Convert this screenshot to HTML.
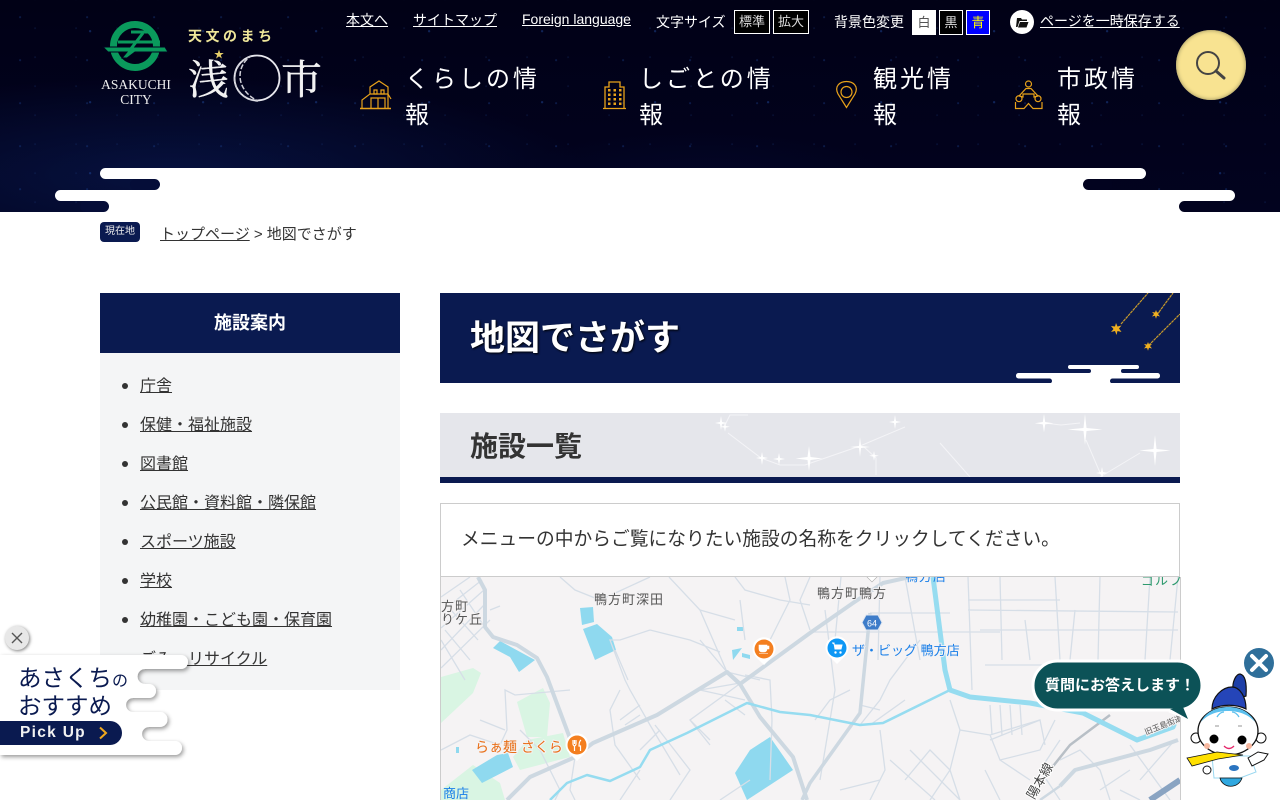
<!DOCTYPE html>
<html lang="ja">
<head>
<meta charset="utf-8">
<title>地図でさがす</title>
<style>
html,body{margin:0;padding:0;background:#fff}
body{width:1280px;height:800px;overflow:hidden;position:relative;font-family:"Liberation Sans","Noto Sans CJK JP",sans-serif;color:#333;font-size:16px}
a{color:inherit}
.a{position:absolute;white-space:nowrap}
#hd{position:absolute;left:0;top:0;width:1280px;height:212px;overflow:hidden;
background:
radial-gradient(circle at 30% 40%,rgba(30,70,150,.35) 0 .8px,transparent 1.3px) 0 0/67px 43px,
radial-gradient(circle at 70% 20%,rgba(30,70,150,.5) 0 .9px,transparent 1.4px) 11px 17px/113px 71px,
radial-gradient(circle at 10% 80%,rgba(25,55,120,.25) 0 .7px,transparent 1.2px) 31px 5px/41px 29px,
radial-gradient(ellipse 420px 100px at 170px 175px,rgba(10,30,90,.55),transparent),
radial-gradient(ellipse 200px 60px at 700px 190px,rgba(6,14,60,.4),transparent),
linear-gradient(180deg,#010116 0,#010118 40px,#02031f 212px)}
.tl{font-size:14px;color:#fff;text-decoration:underline;line-height:20px}
.lb{font-size:14px;color:#fff;line-height:20px}
.bt{position:absolute;top:10px;height:22px;border:1px solid #fff;font-size:13px;line-height:22px;text-align:center;color:#ddd;background:#000}
.nav{position:absolute;top:62px;font-size:24px;line-height:36px;letter-spacing:3px;color:#fff;white-space:nowrap}
#side{position:absolute;left:100px;top:293px;width:300px;height:397px;background:#f4f5f6}
#side h2{margin:0;height:60px;background:#0a1a50;color:#fff;font-size:18px;font-weight:bold;line-height:61px;text-align:center}
#side ul{margin:0;padding:13px 0 0 40px}
#side li{height:39px;line-height:39px;font-size:16px}
#side li::marker{font-size:20px}
#h1{position:absolute;left:440px;top:293px;width:740px;height:90px;background:#0a1a50;overflow:hidden}
#h1 div{position:absolute;left:30px;top:24px;font-size:35px;line-height:44px;font-weight:bold;color:#fff;text-shadow:1px 1px 2px #000;white-space:nowrap}
#h2{position:absolute;left:440px;top:413px;width:740px;height:64px;background:#e5e6eb;border-bottom:6px solid #0a1a50;overflow:hidden}
#h2 div{position:absolute;left:30px;top:16px;font-size:28px;line-height:36px;font-weight:bold;color:#333;white-space:nowrap}
#box{position:absolute;left:440px;top:503px;width:738px;height:72px;border:1px solid #ccc;background:#fff}
#box div{position:absolute;left:20px;top:21px;font-size:18.750px;line-height:28px;white-space:nowrap}
#map{position:absolute;left:440px;top:577px;width:739px;height:223px;border-left:1px solid #ccc;border-right:1px solid #ccc;overflow:hidden;background:#f5f3f4}
#map text{font-family:"Liberation Sans","Noto Sans CJK JP",sans-serif}
</style>
</head>
<body>

<div id="hd">
  <svg class="a" style="left:0;top:0" width="1280" height="212" viewBox="0 0 1280 212">
    <rect x="100" y="168" width="1046" height="11" rx="5.500" fill="#fff"/>
    <rect x="150" y="176" width="943" height="18" fill="#fff"/>
    <rect x="55" y="190" width="1180" height="11" rx="5.500" fill="#fff"/>
    <rect x="99" y="198" width="1090" height="14" fill="#fff"/>
    <rect x="130" y="179" width="30" height="11" rx="5.500" fill="#050d38"/>
    <rect x="1083" y="179" width="30" height="11" rx="5.500" fill="#02031f"/>
    <rect x="80" y="201" width="29" height="11" rx="5.500" fill="#050d38"/>
    <rect x="1179" y="201" width="30" height="11" rx="5.500" fill="#02031f"/>
    <!-- logo -->
    <circle cx="135" cy="46" r="21.500" fill="none" stroke="#0a9a5c" stroke-width="7"/>
    <path d="M103 47H165L168 52H135L127 58H122L127 52H108Z" fill="#0a9a5c" stroke="#030320" stroke-width="1"/>
    <path d="M118 42H160M131 32H152M143 33L130 50" fill="none" stroke="#0a9a5c" stroke-width="3"/>
    <circle cx="257" cy="78" r="22.500" fill="none" stroke="#e8e8ee" stroke-width="1.800"/>
    <path d="M251 56C236 62 230 78 238 90C241 96 250 101 258 101C247 96 240 86 240 76C240 67 245 60 251 56Z" fill="none" stroke="#d0d0d8" stroke-width="1.500" stroke-dasharray="5 2"/>
    <!-- house -->
    <g fill="none" stroke="#e8a21a" stroke-width="1.200">
      <path d="M360 108.500H391" stroke-width="1.600"/>
      <path d="M362 108V100L370 94V87L379 81L388 87V94L391 99M370 94H388V108M371 108V98H385V108M378 98V108"/>
      <path d="M374 90h3v4h-3zM381 90h3v4h-3z"/>
    </g>
    <!-- building -->
    <g fill="none" stroke="#e8a21a" stroke-width="1.300">
      <path d="M603 108.500H626"/>
      <path d="M605 108V87H609V82H620V87H624V108"/>
    </g>
    <g fill="#e8a21a">
      <rect x="608" y="89" width="2.500" height="2.500"/><rect x="613.500" y="89" width="2.500" height="2.500"/><rect x="619" y="89" width="2.500" height="2.500"/>
      <rect x="608" y="93.500" width="2.500" height="2.500"/><rect x="613.500" y="93.500" width="2.500" height="2.500"/><rect x="619" y="93.500" width="2.500" height="2.500"/>
      <rect x="608" y="98" width="2.500" height="2.500"/><rect x="613.500" y="98" width="2.500" height="2.500"/><rect x="619" y="98" width="2.500" height="2.500"/>
      <rect x="608" y="102.500" width="2.500" height="2.500"/><rect x="613.500" y="102.500" width="2.500" height="2.500"/><rect x="619" y="102.500" width="2.500" height="2.500"/>
    </g>
    <!-- pin -->
    <g fill="none" stroke="#e8a21a" stroke-width="1.200">
      <path d="M846.500 107.500L838 94C834 86 840 81.500 846.500 81.500S859 86 855 94Z"/>
      <circle cx="846.500" cy="92" r="5.500"/>
    </g>
    <!-- people -->
    <g fill="none" stroke="#e8a21a" stroke-width="1.200">
      <circle cx="1028.500" cy="84" r="3"/>
      <path d="M1019 96L1026 88.500H1031L1038 96L1034 97V94H1023V97Z"/>
      <circle cx="1019" cy="98.700" r="3"/><circle cx="1038" cy="98.700" r="3"/>
      <path d="M1015.500 102V108.500H1024L1028.500 103.500L1033 108.500H1042V102"/>
    </g>
    <!-- folder -->
    <circle cx="1022" cy="22" r="12" fill="#fff"/>
    <path d="M1017 18h4l1 1.500h5v1.500h-7.500l-2 6h-1.500zM1020 22h8.500l-2 5.500h-8.500z" fill="#111"/>
  </svg>
  <div class="a" style="left:96px;top:77px;width:80px;text-align:center;font-family:'Liberation Serif',serif;font-size:13.500px;line-height:15px;color:#eee">ASAKUCHI<br>CITY</div>
  <div class="a" style="left:188px;top:26px;font-size:14px;line-height:20px;font-weight:bold;letter-spacing:3.500px;color:#efe79a">天文のまち</div>
  <div class="a" style="left:188px;top:49px;font-family:'Noto Serif CJK SC',serif;font-size:41px;line-height:56px;color:#f2f2f2;-webkit-text-stroke:.4px #f2f2f2">浅</div>
  <div class="a" style="left:281px;top:49px;font-family:'Noto Serif CJK SC',serif;font-size:41px;line-height:56px;color:#f2f2f2;-webkit-text-stroke:.4px #f2f2f2">市</div>
  <div class="a" style="left:214px;top:50px;font-size:10px;line-height:12px;color:#e6cf6a">★</div>

  <div class="a tl" style="left:346px;top:10px">本文へ</div>
  <div class="a tl" style="left:413px;top:10px">サイトマップ</div>
  <div class="a tl" style="left:522px;top:9px">Foreign language</div>
  <div class="a lb" style="left:656px;top:12px">文字サイズ</div>
  <div class="bt" style="left:734px;width:34px">標準</div>
  <div class="bt" style="left:773px;width:34px">拡大</div>
  <div class="a lb" style="left:834px;top:12px">背景色変更</div>
  <div class="bt" style="left:912px;width:24px;height:25px;line-height:25px;border:0;background:#fff;color:#555">白</div>
  <div class="bt" style="left:939px;width:22px;height:23px;line-height:23px;background:#000;color:#ddd">黒</div>
  <div class="bt" style="left:966px;width:22px;height:23px;line-height:23px;background:#00f;color:#ff0">青</div>
  <div class="a tl" style="left:1040px;top:11px">ページを一時保存する</div>

  <div class="nav" style="left:405px">くらしの情<br>報</div>
  <div class="nav" style="left:639px">しごとの情<br>報</div>
  <div class="nav" style="left:873px">観光情<br>報</div>
  <div class="nav" style="left:1057px">市政情<br>報</div>
</div>

<div class="a" style="left:1176px;top:30px;width:70px;height:70px;border-radius:50%;background:#f8e391;box-shadow:inset 0 0 4px #8d8558"></div>
<svg class="a" style="left:1176px;top:30px" width="70" height="70" viewBox="0 0 70 70">
  <circle cx="32" cy="33" r="11" fill="none" stroke="#444" stroke-width="2"/>
  <path d="M40 41L48 48" stroke="#444" stroke-width="3" stroke-linecap="round"/>
</svg>

<div class="a" style="left:100px;top:222px;width:40px;height:20px;border-radius:4px;background:#0a1a50;color:#eee;font-size:10px;line-height:20px;text-align:center">現在地</div>
<div class="a" style="left:160px;top:224px;font-size:15px;line-height:22px;color:#333"><a href="#">トップページ</a> &gt; 地図でさがす</div>

<div id="side">
  <h2>施設案内</h2>
  <ul>
    <li><a href="#">庁舎</a></li>
    <li><a href="#">保健・福祉施設</a></li>
    <li><a href="#">図書館</a></li>
    <li><a href="#">公民館・資料館・隣保館</a></li>
    <li><a href="#">スポーツ施設</a></li>
    <li><a href="#">学校</a></li>
    <li><a href="#">幼稚園・こども園・保育園</a></li>
    <li><a href="#">ごみ・リサイクル</a></li>
  </ul>
</div>

<div id="h1">
  <div>地図でさがす</div>
  <svg class="a" style="left:0;top:0" width="740" height="90" viewBox="0 0 740 90">
    <path d="M681 31L708 0M719 19L733 0M706 55L740 21" stroke="#c79a2b" stroke-width="1.200" fill="none" stroke-dasharray="3 .6"/>
    <path d="M676 30l1.500 3.500 4-1-2.500 3 2.500 3.500-4-1-1 4-1.500-4-4 1 2.500-3-2.500-3 4 .5z" fill="#f0b020"/>
    <path d="M716 17l1 2.500 3-.5-2 2 2 2.500-3-.8-1 3-1-3-3 .8 2-2.500-2-2 3 .5z" fill="#f0b020"/>
    <path d="M708 49l1 2.500 3-.5-2 2 2 2.500-3-.8-1 3-1-3-3 .8 2-2.500-2-2 3 .5z" fill="#f0b020"/>
    <rect x="628" y="72" width="71" height="4" rx="2" fill="#fff"/>
    <rect x="576" y="80" width="144" height="5.500" rx="2.500" fill="#fff"/>
    <rect x="645" y="74" width="42" height="8" fill="#fff"/>
    <rect x="605" y="83" width="72" height="7" fill="#fff"/>
    <rect x="590" y="85.500" width="22" height="5" rx="2.500" fill="#0a1a50"/>
    <rect x="670" y="85.500" width="60" height="5" rx="2.500" fill="#0a1a50"/>
    <rect x="635" y="76" width="16" height="4" rx="2" fill="#0a1a50"/>
    <rect x="681" y="76" width="16" height="4" rx="2" fill="#0a1a50"/>
  </svg>
</div>

<div id="h2">
  <div>施設一覧</div>
  <svg class="a" style="left:0;top:0" width="740" height="64" viewBox="0 0 740 64">
    <g stroke="#f4f4f7" stroke-width="1" fill="none">
      <path d="M285 12L290 2H308M288 20L321 45 L340 52H365L420 33L465 14M424 34L436 45V62M604 10L621 12L640 10M700 40L660 64M646 27L661 62M500 30L530 64"/>
    </g>
    <g fill="#fff">
      <path d="M280 0l1 6 5 1-5 1-1 6-1-6-5-1 5-1z" transform="translate(1 3)"/>
      <path d="M285 9l.8 4 4 .8-4 .8-.8 4-.8-4-4-.8 4-.8z"/>
      <path d="M322 39l1 5 5 1-5 1-1 6-1-6-5-1 5-1z"/>
      <path d="M339 40l1 5 5 1-5 1-1 5-1-5-5-1 5-1z"/>
      <path d="M369 33l1.500 11 12 1.500-12 1.500-1.500 11-1.500-11-12-1.500 12-1.500z"/>
      <path d="M420 24l1 9 9 1-9 1-1 9-1-9-9-1 9-1z"/>
      <path d="M455 2l1 6 5 1-5 1-1 6-1-6-5-1 5-1z"/>
      <path d="M434 38l.8 4 4 .8-4 .8-.8 4-.8-4-4-.8 4-.8z"/>
      <path d="M604 1l1.200 8 8 1.200-8 1.200-1.200 8-1.200-8-8-1.200 8-1.200z"/>
      <path d="M645 1l1.500 14 16 1.500-16 1.500-1.500 14-1.500-14-16-1.500 16-1.500z"/>
      <path d="M715 22l1.500 14 14 1.500-14 1.500-1.500 14-1.500-14-14-1.500 14-1.500z"/>
      <path d="M662 54l1 5 5 1-5 1-1 5-1-5-5-1 5-1z"/>
    </g>
  </svg>
</div>

<div id="box"><div>メニューの中からご覧になりたい施設の名称をクリックしてください。</div></div>

<div id="map">
<svg width="739" height="223" viewBox="441 577 739 223" style="display:block">
  <!-- greens -->
  <g fill="#d9f5e3">
    <path d="M441 677L473 668L481 673L473 693L441 723Z"/>
    <path d="M517 702L543 688L550 703L547 737L527 737Z"/>
    <path d="M513 757L527 740L563 733L570 757L520 770Z"/>
    <path d="M441 790L473 765L500 783L505 800H441Z"/>
  </g>
  <!-- ponds -->
  <g fill="#8fd9ef">
    <path d="M580 608L593 607L594 622L582 625Z"/>
    <path d="M583 629L597 624L612 637L616 650L595 660Z"/>
    <path d="M493 648L500 641L535 660L519 672L510 657Z"/>
    <path d="M472 770L497 755L508 753L513 767L482 783Z"/>
    <path d="M735 773L750 750L770 737L793 770L747 800Z"/>
    <path d="M737 627h6v4h-6zM732 650L742 648L733 660ZM742 653L750 655V659L742 657Z"/>
    <path d="M456 747h3v6h-3z"/>
  </g>
  <!-- minor roads -->
  <g fill="none" stroke="#d6dee7" stroke-width="1.300">
    <path d="M441 597L470 577M441 612L482 580M441 628L484 590M441 650L484 605M441 668L490 620M451 610L478 640M445 630L470 660M460 590L490 635M490 610L500 606M441 640L465 680"/>
    <path d="M560 577L575 590L600 600L650 577M650 630L690 640L720 652M650 630L620 640L610 640L625 680L630 690L650 725L680 775M615 650L628 680M620 690L610 710L615 745L640 780M640 705L620 720M625 725L640 715M655 725L690 770L670 800"/>
    <path d="M570 690L515 695L505 690L507 730L500 745L470 735L441 750M505 730L480 720M520 730L540 750L560 790L555 800M575 757L570 790L575 800"/>
    <path d="M669 577L700 610L727 672M700 610L735 620M735 577L745 590L780 600L810 605M740 600L745 640M785 577L790 600L775 630L770 640L772 650M810 577L800 600L810 630M745 680L690 720L710 740M700 690L745 700M740 683L700 690M690 720L710 745M725 700L745 715M745 675L770 680L772 720L770 780"/>
    <path d="M760 680L727 672L700 640M660 730L640 750M640 770L620 800M750 780L720 800"/>
    <path d="M810 632H1000M825 610L835 690L820 780M841 577L835 640M880 577L878 660M920 640L890 680L880 700L860 725M905 577L920 660M870 613H950M905 700L870 725"/>
    <path d="M968 577L972 690M1000 577L1002 660M1055 577L1060 660M1100 577L1098 660M1150 577L1145 660M1178 577L1170 660M968 610L1178 612M968 600H1060M980 630H1178M985 665H1060M1025 620L1030 660M1075 610L1070 660"/>
    <path d="M950 700L960 730L990 735L1040 720L1045 745M990 705L992 735M1000 705L1002 735M1010 705L1012 735M1020 705L1022 735"/>
    <path d="M990 740L1040 720M990 735L1000 760L1040 750L1055 720M1000 760L1030 780M1060 740L1040 770L1060 800M960 730L950 770L930 800M905 780L930 750L950 770L960 800M890 760L935 800M910 750L960 800M985 770L1000 800"/>
    <path d="M1060 760L1080 750L1100 770L1110 800M1130 745L1170 800M1130 770L1100 790M1120 790L1140 800M1175 740L1140 780"/>
    <path d="M850 690L830 700L815 720M860 705L880 710M880 730L885 770L870 800M840 790L880 780M1060 680L1090 700M1150 690L1178 700"/>
  </g>
  <!-- major roads -->
  <g fill="none" stroke="#cdd8e1" stroke-linejoin="round">
    <path stroke-width="4" d="M478 577L485 590L485 627L493 637L517 645L537 658L547 677L568 733L577 757"/>
    <path stroke-width="4" d="M507 800L530 777L573 758L593 743L657 715L727 672L740 684L810 633L853 603L883 583L910 577"/>
    <path stroke-width="4" d="M727 672L740 684L760 717L793 757L807 800"/>
    <path stroke-width="3.500" d="M870 613L860 713L810 783L802 800"/>
    <path stroke-width="4" d="M1060 786L1075 770L1150 750L1178 740"/>
    <path stroke-width="2.500" d="M1060 786L1040 800"/>
    <path stroke-width="2.500" d="M1050 770L1070 745L1110 715" stroke="#b8bfc6"/>
  </g>
  <!-- rivers -->
  <g fill="none" stroke="#96dcf0" stroke-linejoin="round">
    <path stroke-width="2.500" d="M550 800L567 783L587 775L610 781L640 767L650 750L687 733L747 703L780 712L810 715L860 725L883 723L950 690"/>
    <path stroke-width="5" d="M933 577L945 670L950 690L970 697L1030 703L1083 713L1137 740L1173 727L1178 715"/>
  </g>
  <path d="M1150 800L1180 780" stroke="#8aa4c2" stroke-width="6" fill="none"/>
  <!-- shield 64 -->
  <path d="M862 622.500L866 615H878L882 622.500L878 630H866Z" fill="#3d7cc9" stroke="#dfe6f0"/>
  <text x="872" y="626.500" font-size="9" fill="#fff" text-anchor="middle">64</text>
  <!-- labels -->
  <g font-size="13" fill="#555" style="paint-order:stroke" stroke="#f5f3f4" stroke-width="2">
    <text x="594" y="604" letter-spacing="1">鴨方町深田</text>
    <text x="817" y="598" letter-spacing="1">鴨方町鴨方</text>
    <text x="441" y="611" letter-spacing="1">方町</text>
    <text x="441" y="624" letter-spacing="1">りケ丘</text>
  </g>
  <text x="852" y="655" font-size="13" fill="#1a7fe8" stroke="#f5f3f4" stroke-width="2" style="paint-order:stroke">ザ・ビッグ 鴨方店</text>
  <text x="475" y="752" font-size="14" fill="#e8701a" stroke="#f5f3f4" stroke-width="2" style="paint-order:stroke">らぁ麺 さくら</text>
  <text x="443" y="798" font-size="13" fill="#1a7fe8">商店</text>
  <text x="1141" y="585" font-size="13" fill="#2e9a6e" letter-spacing="1">ゴルフ</text>
  <text x="905" y="581" font-size="13" fill="#1a7fe8" letter-spacing="1">鴨方店</text>
  <text transform="translate(1146 735) rotate(-22)" font-size="8" fill="#555" stroke="#f5f3f4" stroke-width="2" style="paint-order:stroke">旧玉島街道</text>
  <text transform="translate(1034 800) rotate(-60)" font-size="13" fill="#444" stroke="#fff" stroke-width="2" style="paint-order:stroke">陽本線</text>
  <!-- pins -->
  <path d="M866 572h12v4l-6 6-6-6z" fill="#fff" stroke="#aaa" stroke-width=".6"/>
  <g>
    <path d="M764 665L756 657A11.500 11.500 0 1 1 772 657Z" fill="#fff"/>
    <circle cx="764" cy="649" r="9.500" fill="#f47f20"/>
    <path d="M759 645h8v4a3 3 0 0 1-3 3h-2a3 3 0 0 1-3-3zM767 646h2v3h-2zM759 653.500h9" fill="#fff" stroke="#fff" stroke-width=".6"/>
  </g>
  <g>
    <path d="M577 761L569 753A11.500 11.500 0 1 1 585 753Z" fill="#fff"/>
    <circle cx="577" cy="745" r="9.500" fill="#f47f20"/>
    <path d="M573 740v4c0 1 1 2 1.500 2v5M576 740v4c0 1-1 2-1.500 2M574.500 740v4M581 740c-1.500 1-2 3-2 6h1.500v5" fill="none" stroke="#fff" stroke-width="1.200"/>
  </g>
  <g>
    <path d="M837 664L829 656A11.500 11.500 0 1 1 845 656Z" fill="#fff"/>
    <circle cx="837" cy="648" r="9.500" fill="#0d97f5"/>
    <path d="M832 643h2l1 6h6l1-4h-7.500" fill="#fff" stroke="#fff" stroke-width="1"/>
    <circle cx="835.500" cy="652.500" r="1.200" fill="#fff"/><circle cx="840.500" cy="652.500" r="1.200" fill="#fff"/>
  </g>
</svg>
</div>

<!-- Pick up banner -->
<svg class="a" style="left:0;top:650px" width="200" height="120" viewBox="0 650 200 120">
  <defs><filter id="sh" x="-10%" y="-10%" width="125%" height="125%"><feDropShadow dx="1.500" dy="2" stdDeviation="2" flood-color="#000" flood-opacity=".4"/></filter></defs>
  <path filter="url(#sh)" fill="#fff" d="M0 655H181A7 7 0 0 1 181 669H145A7.500 7.500 0 0 0 145 684H149A7 7 0 0 1 149 698H133A7 7 0 0 0 133 712H160A7.500 7.500 0 0 1 160 727H149A7 7 0 0 0 149 741H175A7 7 0 0 1 175 755H0Z"/>
  <path d="M0 721H110A12 12 0 0 1 110 745H0Z" fill="#0a1a50"/>
  <path d="M100 727.500L106 733L100 738.500" fill="none" stroke="#f0a81e" stroke-width="2"/>
</svg>
<div class="a" style="left:18px;top:661px;font-size:23.500px;line-height:34px;color:#0a1a50">あさくち<span style="font-size:16px">の</span></div>
<div class="a" style="left:18px;top:689px;font-size:23.500px;line-height:34px;color:#0a1a50">おすすめ</div>
<div class="a" style="left:20px;top:722px;font-size:15.500px;line-height:22px;letter-spacing:1.300px;font-weight:bold;color:#f2f2f2">Pick Up</div>
<div class="a" style="left:5px;top:626px;width:24px;height:24px;border-radius:50%;background:#e8e8e8;box-shadow:1px 1px 3px rgba(0,0,0,.5);"></div>
<svg class="a" style="left:5px;top:626px" width="24" height="24" viewBox="0 0 24 24"><path d="M7 7L17 17M17 7L7 17" stroke="#555" stroke-width="1.400"/></svg>

<!-- chat -->
<svg class="a" style="left:1028px;top:645px" width="252" height="155" viewBox="1028 645 252 155">
  <path d="M1168 712L1190 721L1184 708Z" fill="#fff"/>
  <rect x="1033" y="661" width="169" height="49" rx="24.500" fill="#0c5257" stroke="#fff" stroke-width="3"/>
  <path d="M1170 709L1188 719L1183 707Z" fill="#0c5257"/>
  <circle cx="1259" cy="663" r="15" fill="#2f6f9a"/>
  <path d="M1252 656L1266 670M1266 656L1252 670" stroke="#fff" stroke-width="4" stroke-linecap="round"/>
  <!-- mascot -->
  <path d="M1233 690C1232 682 1236 674 1240 674C1245 675 1247 682 1246 696L1240 698Z" fill="#1d3fa8" stroke="#111" stroke-width="1.200"/>
  <path d="M1212 709C1212 697 1222 687 1232 687C1240 687 1246 697 1246 709C1236 704 1222 704 1212 709Z" fill="#2545b8" stroke="#111" stroke-width="1.200"/>
  <circle cx="1196" cy="738" r="5" fill="#fff" stroke="#111" stroke-width="1"/>
  <circle cx="1261" cy="738" r="5" fill="#fff" stroke="#111" stroke-width="1"/>
  <ellipse cx="1228" cy="731" rx="30" ry="24" fill="#fff" stroke="#111" stroke-width="1.300"/>
  <path d="M1201 722C1206 711 1218 707 1228 707C1240 707 1250 712 1255 722C1248 714 1238 711 1228 711C1218 711 1208 714 1201 722Z" fill="#5cc0ee"/>
  <path d="M1217 717Q1220 712 1224 712M1232 712Q1236 712 1239 717" stroke="#5cc0ee" fill="none" stroke-width="1.300"/>
  <circle cx="1214" cy="739" r="4.500" fill="#000"/><circle cx="1242" cy="740" r="4.500" fill="#000"/>
  <circle cx="1207" cy="746" r="3" fill="#f7b8a0"/><circle cx="1249" cy="746" r="3" fill="#f7b8a0"/>
  <path d="M1224 746Q1229 751 1234 746" stroke="#e5266a" fill="none" stroke-width="1.300"/>
  <path d="M1215 726h4M1238 726h4" stroke="#aaa" stroke-width="1.300"/>
  <path d="M1212 756H1250L1256 772L1240 778H1214Z" fill="#fff" stroke="#9ad8f0"/>
  <path d="M1220 778C1222 788 1238 790 1242 778Z" fill="#30a8e0" stroke="#111" stroke-width=".8"/>
  <path d="M1187 758L1217 752L1243 755L1218 759L1192 766Z" fill="#ffe000" stroke="#111" stroke-width=".8"/>
  <path d="M1248 758L1258 752L1268 754L1264 760L1252 766Z" fill="#fff" stroke="#111"/>
  <circle cx="1207" cy="770" r="4" fill="#fff" stroke="#111"/>
  <ellipse cx="1234" cy="768" rx="5" ry="3" fill="#2a74c0"/>
</svg>
<div class="a" style="left:1045px;top:675px;font-size:15px;line-height:22px;font-weight:bold;color:#fff">質問にお答えします！</div>

</body>
</html>
